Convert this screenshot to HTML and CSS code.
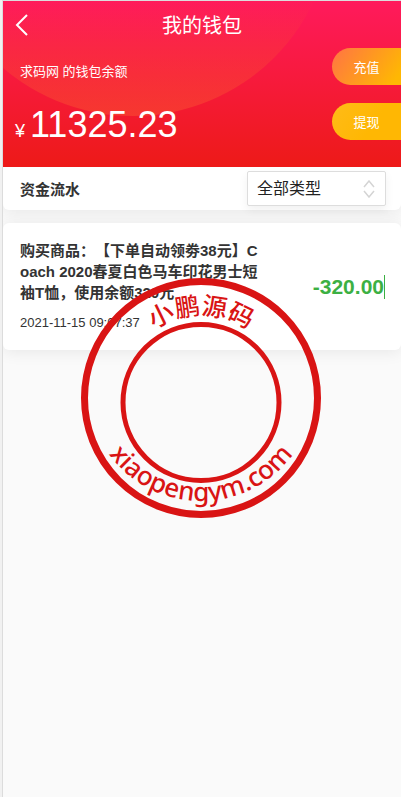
FILE: index.html
```html
<!DOCTYPE html>
<html lang="zh-CN">
<head>
<meta charset="utf-8">
<meta name="viewport" content="width=device-width, initial-scale=1">
<title>我的钱包</title>
<link rel="stylesheet" href="styles.css">
</head>
<body>
<div class="page">
  <header class="hero">
    <nav class="navbar">
      <button class="back" type="button" aria-label="返回">
        <svg width="14" height="22" viewBox="0 0 14 22" fill="none" stroke="currentColor" stroke-width="2"><path d="M12 1 2 11l10 10"/></svg>
      </button>
      <h1 class="title">我的钱包</h1>
    </nav>
    <div class="wallet">
      <div class="balance">
        <p class="owner">求码网 的钱包余额</p>
        <p class="total"><span class="currency">¥</span><span class="sum">11325.23</span></p>
      </div>
      <div class="actions">
        <button class="action recharge" type="button">充值</button>
        <button class="action withdraw" type="button">提现</button>
      </div>
    </div>
  </header>
  <main>
    <section class="card filter">
      <label class="filter-label" for="type">资金流水</label>
      <div class="picker">
        <select id="type"><option>全部类型</option></select>
        <svg class="arrows" width="12" height="18" viewBox="0 0 12 18" fill="none" stroke="currentColor" stroke-width="1.5"><path d="m1 7 5-6 5 6M1 11l5 6 5-6"/></svg>
      </div>
    </section>
    <article class="card entry">
      <div class="detail">
        <h2 class="name">购买商品：【下单自动领劵38元】Coach 2020春夏白色马车印花男士短袖T恤，使用余额320元</h2>
        <time class="date">2021-11-15 09:07:37</time>
      </div>
      <div class="amount">-320.00</div>
    </article>
  </main>
  <svg class="stamp" width="242" height="242" viewBox="0 0 242 242">
    <defs>
      <path id="upper-arc" d="M38 121a83 83 0 0 1 166 0"/>
      <path id="lower-arc" d="M7 110a114 114 0 0 0 228 0"/>
    </defs>
    <circle class="ring" cx="121" cy="121" r="116.5" stroke-width="7"/>
    <circle class="ring" cx="121" cy="125.5" r="78" stroke-width="5"/>
    <text class="stamp-name"><textPath href="#upper-arc" startOffset="50%">小鹏源码</textPath></text>
    <text class="stamp-site"><textPath href="#lower-arc" startOffset="50%">xiaopengym.com</textPath></text>
  </svg>
</div>
</body>
</html>
```
FILE: styles.css
```css
* {
  box-sizing: border-box;
}

body {
  margin: 0;
  background: #f1f1f1;
  color: #333;
  font-family: "Liberation Sans", "Noto Sans CJK SC", sans-serif;
}

h1, h2, p {
  margin: 0;
  font-weight: normal;
}

button {
  padding: 0;
  border: 0;
  background: none;
  color: #fff;
  font-family: inherit;
}

.page {
  position: relative;
  min-height: 100vh;
  margin-left: 2px;
  border-top: 1px solid #dcdcdc;
  border-left: 1px solid #dcdcdc;
  background: #fafafa;
  overflow: hidden;
}

.hero {
  position: relative;
  padding-bottom: 16px;
  overflow: hidden;
  background: linear-gradient(#ff1a5c, #ed1a18);
  color: #fff;
}

.hero::before {
  content: "";
  position: absolute;
  left: -70px;
  top: -285px;
  width: 400px;
  height: 400px;
  border-radius: 50%;
  background: linear-gradient(rgba(255, 120, 110, 0) 70%, rgba(250, 85, 50, 0.5));
}

.navbar {
  position: relative;
  display: grid;
  grid-template-columns: 40px 1fr 40px;
  align-items: center;
  height: 47px;
}

.back {
  display: flex;
  padding-left: 12px;
}

.title {
  padding-top: 3px;
  font-size: 20px;
  line-height: 28px;
  text-align: center;
}

.wallet {
  position: relative;
  display: flex;
  justify-content: space-between;
}

.balance {
  padding: 14px 0 0 12px;
}

.owner {
  padding-left: 5px;
  font-size: 13px;
  line-height: 20px;
}

.total {
  display: flex;
  align-items: baseline;
  gap: 5px;
  margin-top: 23px;
  line-height: 40px;
}

.currency {
  font-size: 18px;
}

.sum {
  font-size: 36px;
}

.actions {
  display: grid;
  gap: 18px;
  align-content: start;
}

.action {
  width: 69px;
  height: 37px;
  border-radius: 20px 0 0 20px;
  font-size: 13px;
}

.recharge {
  background: linear-gradient(125deg, #ff7444, #ffb703 90%);
}

.withdraw {
  background: linear-gradient(125deg, #ffbb18, #ffb703 60%);
}

.card {
  background: #fff;
  box-shadow: 0 2px 16px rgba(0, 0, 0, 0.08);
}

.filter {
  display: flex;
  align-items: center;
  justify-content: space-between;
  padding: 4px 15px 4px 17px;
  border-radius: 0 0 6px 6px;
}

.filter-label {
  font-size: 15px;
  font-weight: bold;
}

.picker {
  position: relative;
  width: 139px;
}

.picker select {
  display: block;
  width: 100%;
  height: 35px;
  padding: 0 9px;
  appearance: none;
  border: 1px solid #ddd;
  border-radius: 2px;
  background: #fff;
  box-shadow: 0 4px 10px rgba(0, 0, 0, 0.06);
  color: #222;
  font-family: inherit;
  font-size: 16px;
}

.arrows {
  position: absolute;
  top: 9px;
  right: 11px;
  color: #d4d4d4;
  pointer-events: none;
}

.entry {
  display: flex;
  align-items: center;
  justify-content: space-between;
  margin-top: 13px;
  padding: 17px 16px 17px 17px;
  border-radius: 6px;
}

.detail {
  width: 240px;
}

.name {
  font-size: 15px;
  font-weight: bold;
  line-height: 21px;
  word-break: break-all;
  text-spacing-trim: space-all;
}

.date {
  display: block;
  margin-top: 10px;
  font-size: 13px;
  line-height: 20px;
}

.amount {
  border-right: 1px solid #3cb043;
  color: #3cb043;
  font-size: 21px;
  font-weight: bold;
  line-height: 24px;
}

.stamp {
  position: absolute;
  top: 276px;
  left: calc(50% - 122px);
  pointer-events: none;
}

.ring {
  fill: none;
  stroke: #d91414;
}

.stamp text {
  fill: #d91414;
  text-anchor: middle;
}

.stamp-name {
  font-family: "Noto Sans CJK SC", sans-serif;
  font-size: 25px;
  font-weight: 500;
}

.stamp-site {
  font-family: "Noto Sans", sans-serif;
  font-size: 26px;
  font-weight: 500;
}
```
